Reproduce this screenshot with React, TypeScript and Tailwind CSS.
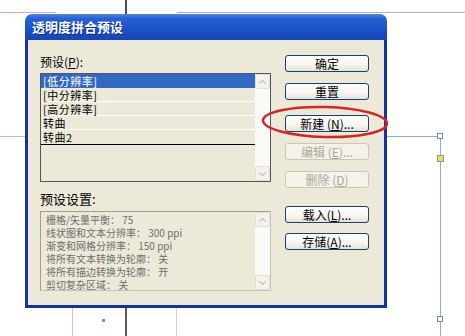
import React from "react";

function ArrowBox({ dir }: { dir: "up" | "down" }) {
  return (
    <div className="w-[15px] h-[15px] rounded-[2px] border border-[#E2E0D6] bg-[#F3F2EC] flex items-center justify-center">
      <svg width="7" height="4" viewBox="0 0 7 4">
        <path
          d={dir === "up" ? "M0.5 3.5 L3.5 0.5 L6.5 3.5" : "M0.5 0.5 L3.5 3.5 L6.5 0.5"}
          stroke="#C6C4B8"
          fill="none"
          strokeWidth="1.3"
        />
      </svg>
    </div>
  );
}

function ScrollBar() {
  return (
    <div className="w-[15px] shrink-0 bg-[#FAFAF7] flex flex-col justify-between">
      <ArrowBox dir="up" />
      <ArrowBox dir="down" />
    </div>
  );
}

function Btn({
  children,
  disabled,
  className,
}: {
  children: React.ReactNode;
  disabled?: boolean;
  className?: string;
}) {
  return (
    <div
      className={
        "h-[17px] w-[84px] rounded-[3px] border flex items-center justify-center text-[12px] leading-[13px] " +
        (disabled
          ? "border-[#C9C7BA] bg-[#F4F3EA] text-[#ACA899] "
          : "border-[#1C3E70] bg-[linear-gradient(180deg,#FFFFFF_0%,#F6F5F0_60%,#E4E2D8_100%)] text-black ") +
        (className ?? "")
      }
    >
      {children}
    </div>
  );
}

const rows = ["[低分辨率]", "[中分辨率]", "[高分辨率]", "转曲", "转曲2"];
const settings = [
  "栅格/矢量平衡： 75",
  "线状图和文本分辨率： 300 ppi",
  "渐变和网格分辨率： 150 ppi",
  "将所有文本转换为轮廓： 关",
  "将所有描边转换为轮廓： 开",
  "剪切复杂区域： 关",
];

export default function App() {
  return (
    <div
      className="relative w-[465px] h-[336px] bg-white overflow-hidden pt-[14px] pl-[25px]"
      style={{ fontFamily: '"Noto Sans CJK SC", "Noto Sans", sans-serif' }}
    >
      {/* canvas decorations */}
      <div className="absolute left-0 top-[12px] w-[56px] h-px bg-[#D8A8B8]" />
      <div className="absolute left-[177px] top-[12px] right-0 h-px bg-[#B4ACBC]" />
      <div className="absolute left-[125px] top-0 h-[14px] w-[2px] bg-[#505050]" />
      <div className="absolute left-0 top-[136px] w-[25px] h-px bg-[#A8C0F0]" />
      <div className="absolute left-[387px] top-[136px] w-[53px] h-px bg-[#8EA8EE]" />
      <div className="absolute left-[440px] top-[136px] bottom-0 w-px bg-[#8EA8EE]" />
      <div className="absolute left-[437px] top-[133px] w-[6px] h-[6px] border border-[#6F86C8] bg-white" />
      <div className="absolute left-[437px] top-[155px] w-[7px] h-[7px] border border-[#8C93B8] bg-[#EEE048]" />
      <div className="absolute left-[437px] top-[316px] w-[6px] h-[6px] border border-[#6F86C8] bg-white" />
      <div className="absolute left-[72px] top-[308px] bottom-0 w-px bg-[#C8C2E8]" />
      <div className="absolute left-[125px] top-[308px] bottom-0 w-[2px] bg-[#5A5A5A]" />
      <div className="absolute left-[176px] top-[308px] bottom-0 w-px bg-[#D4CEE0]" />
      <div className="absolute left-[102px] top-[319px] w-[3px] h-[3px] bg-[#7090E0]" />

      {/* dialog */}
      <div className="relative w-[362px] h-[294px] flex flex-col rounded-t-[7px] overflow-hidden">
        <div className="h-[26px] shrink-0 flex items-center pl-[7px] text-white font-bold text-[13px] leading-[16px] bg-[linear-gradient(180deg,#4F84E2_0%,#2660D4_18%,#1A50C8_60%,#1644B8_100%)] [text-shadow:1px_1px_0_#0A2A80]">
          透明度拼合预设
        </div>
        <div className="flex-1 bg-[#ECE9D8] border-x-[3px] border-b-[3px] border-[#14339C] flex pl-[12px] pt-[15px]">
          {/* left column */}
          <div className="w-[231px] flex flex-col">
            <div className="h-[14px] leading-[14px] text-[12px] text-black">
              预设(<span className="underline">P</span>):
            </div>
            <div className="mt-[4px] h-[109px] border border-[#555555] flex">
              <div className="flex-1 bg-[#ECE9D8] flex flex-col">
                {rows.map((r, i) => (
                  <div
                    key={r}
                    className={
                      "pl-[2px] text-[11px] leading-[12px] flex items-center tracking-[0.5px] " +
                      (i === 0
                        ? "h-[14px] bg-[#316AC5] text-white"
                        : i === rows.length - 1
                        ? "h-[15px] border-b border-black text-black"
                        : "h-[14px] border-b border-white text-black")
                    }
                  >
                    {r}
                  </div>
                ))}
              </div>
              <ScrollBar />
            </div>
            <div className="mt-[10px] h-[14px] leading-[14px] text-[13px] text-black">预设设置:</div>
            <div className="mt-[5px] h-[80px] border border-[#C4C2B6] border-t-[#A09E94] border-l-[#A09E94] flex">
              <div className="flex-1 pl-[5px] pt-[1px] flex flex-col">
                {settings.map((s) => (
                  <div key={s} className="h-[13px] leading-[13px] text-[10px] text-[#6E6E6E] whitespace-nowrap">
                    {s}
                  </div>
                ))}
              </div>
              <ScrollBar />
            </div>
          </div>

          {/* right column */}
          <div className="ml-[14px] w-[84px] flex flex-col">
            <Btn>确定</Btn>
            <Btn className="mt-[11px]">重置</Btn>
            <Btn className="mt-[15px]">
              新建 (<span className="underline">N</span>)...
            </Btn>
            <Btn className="mt-[11px]" disabled>
              编辑 (<span className="underline">E</span>)...
            </Btn>
            <Btn className="mt-[11px]" disabled>
              删除 (<span className="underline">D</span>)
            </Btn>
            <Btn className="mt-[18px]">
              载入(<span className="underline">L</span>)...
            </Btn>
            <Btn className="mt-[10px]">
              存储(<span className="underline">A</span>)...
            </Btn>
          </div>
        </div>
      </div>

      {/* red annotation ellipse */}
      <svg className="absolute left-[259px] top-[103px]" width="132" height="38" viewBox="0 0 132 38">
        <ellipse
          cx="66"
          cy="19"
          rx="62"
          ry="15"
          fill="none"
          stroke="#D42626"
          strokeWidth="2.5"
          transform="rotate(1.5 66 19)"
        />
      </svg>
    </div>
  );
}
